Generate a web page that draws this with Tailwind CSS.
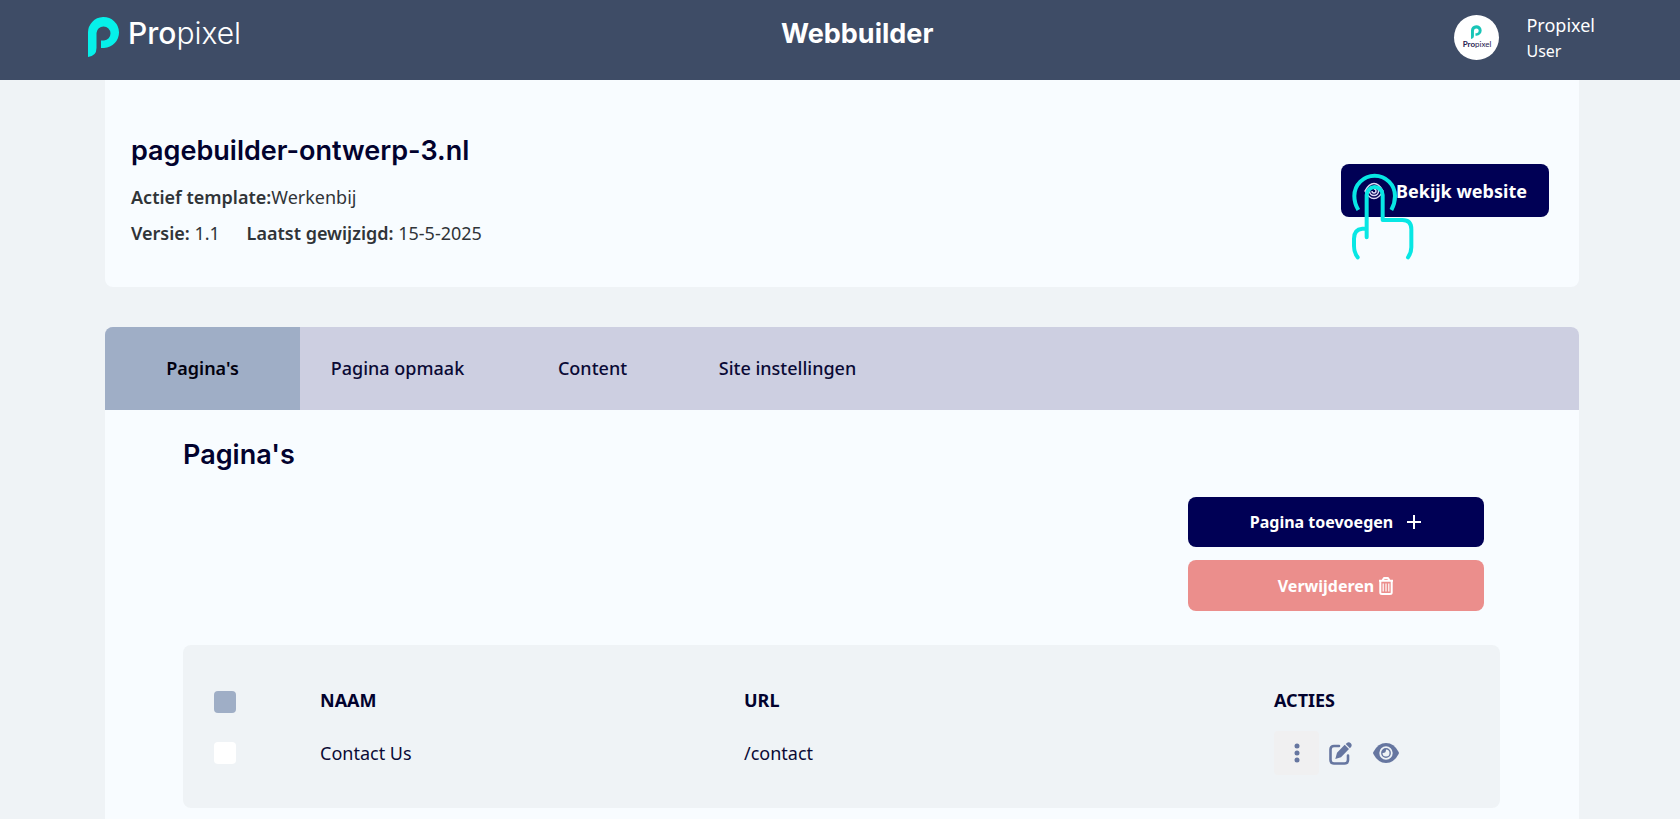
<!DOCTYPE html>
<html lang="nl">
<head>
<meta charset="utf-8">
<meta name="viewport" content="width=device-width, initial-scale=1">
<title>Webbuilder</title>
<script src="https://cdn.jsdelivr.net/npm/@tailwindcss/browser@4"></script>
</head>
<body class="min-h-screen bg-[#eff3f6] font-['Noto_Sans',sans-serif] text-lg text-[#0a0a35]">
<header class="flex h-20 items-start justify-between bg-[#3e4c66] pl-[88px] pr-[85px] text-white">
  <a href="#" class="flex w-[172px] items-start gap-2 pt-[17px]" aria-label="Propixel">
    <svg class="h-10 w-8 shrink-0" viewBox="0 0 32 40" aria-hidden="true">
      <path d="M0 40V16A15.500 15.500 0 1 1 16 31H13V23.500H16A7 7 0 1 0 8.500 16V31Q8.500 39 0 40Z" fill="#06f0ea"/>
    </svg>
    <span class="font-['Inter',sans-serif] text-[30px] leading-8"><span class="font-medium">Pro</span><span class="font-light">pixel</span></span>
  </a>
  <h1 class="pt-4 font-['Inter',sans-serif] text-[27px] font-bold leading-9">Webbuilder</h1>
  <div class="flex gap-[27px] pt-3">
    <div class="mt-[3px] flex size-[45px] flex-col items-center rounded-full bg-white pt-2.5">
      <svg class="h-[14px] w-[11px]" viewBox="0 0 32 40" aria-hidden="true">
        <path d="M0 40V16A15.500 15.500 0 1 1 16 31H13V23.500H16A7 7 0 1 0 8.500 16V31Q8.500 39 0 40Z" fill="#19c5b7"/>
      </svg>
      <span class="font-['Lato',sans-serif] text-[8px] leading-[10px] text-[#252050]"><span class="font-bold">Pro</span>pixel</span>
    </div>
    <div class="leading-[26px]">
      <p>Propixel</p>
      <p class="text-base leading-[26px]">User</p>
    </div>
  </div>
</header>

<main class="ml-[105px] mr-[101px]">
  <section class="flex items-start justify-between rounded-b-lg bg-[#f8fcff] pb-9 pl-[26px] pr-[30px] pt-[53px] text-[#303438]">
    <div>
      <h2 class="font-['Inter',sans-serif] text-[27px] font-semibold leading-9 text-[#02022e]">pagebuilder-ontwerp-3.nl</h2>
      <p class="mt-2.5 leading-9"><span class="font-semibold">Actief template:</span>Werkenbij</p>
      <p class="leading-9"><span class="font-semibold">Versie:</span> 1.1 <span class="ml-[22px] font-semibold">Laatst gewijzigd:</span> 15-5-2025</p>
    </div>
    <div class="relative mt-[31px]">
      <button type="button" class="flex h-[53px] w-[208px] items-center gap-3 rounded-lg bg-[#000055] pl-[23px] font-bold text-white">
        <svg class="h-[18px] w-5 shrink-0" viewBox="0 0 20 18" fill="none" stroke="#ddd8f4" stroke-width="1.500" aria-hidden="true">
          <path d="M1 9Q5 1.500 10 1.500T19 9Q15 16.500 10 16.500T1 9Z"/><circle cx="10" cy="9" r="4.500"/><path d="M10 7a2 2 0 1 1-2 2"/>
        </svg>
        Bekijk website
      </button>
      <svg class="pointer-events-none absolute left-2 top-1.5 h-[93px] w-[67px]" viewBox="120 90 201 279" fill="none" stroke="#08e7e4" stroke-width="12" stroke-linejoin="round" aria-hidden="true">
        <path d="M148 210Q136 190 136 168A61 61 0 0 1 258 168Q258 190 247 210"/>
        <path stroke-linecap="round" d="M173 292V165a24 24 0 0 1 48 0V240H280Q307 240 307 268V322Q307 338 297 352M168 266H160Q135 268 135 296V318Q135 338 146 352"/>
      </svg>
    </div>
  </section>

  <section class="mt-10 rounded-t-lg bg-[#f8fcff]">
    <nav class="flex h-[83px] overflow-hidden rounded-t-lg bg-[#cdcfe1]">
      <a href="#" aria-current="page" class="flex w-[195px] items-center justify-center bg-[#9faec6] pb-0.5 font-semibold text-[#02020f]">Pagina's</a>
      <a href="#" class="flex w-[195px] items-center justify-center pb-0.5 font-medium">Pagina opmaak</a>
      <a href="#" class="flex w-[195px] items-center justify-center pb-0.5 font-medium">Content</a>
      <a href="#" class="flex w-[195px] items-center justify-center pb-0.5 font-medium">Site instellingen</a>
    </nav>
    <div class="pb-10 pl-[78px] pr-[79px] pt-[27px]">
      <h2 class="font-['Inter',sans-serif] text-[27px] font-semibold leading-9 text-[#02022e]">Pagina's</h2>
      <div class="ml-auto mr-4 mt-6 flex w-[296px] flex-col gap-[13px] text-base font-bold text-white">
        <button type="button" class="flex h-[50px] items-center justify-center gap-[13px] rounded-lg bg-[#000055]">
          Pagina toevoegen
          <svg class="size-4" viewBox="0 0 16 16" stroke="currentColor" stroke-width="2" aria-hidden="true"><path d="M8 1V15M1 8H15"/></svg>
        </button>
        <button type="button" class="flex h-[51px] items-center justify-center gap-1 rounded-lg bg-[#eb8e8c]">
          Verwijderen
          <svg class="h-[18px] w-4" viewBox="0 0 16 18" fill="none" stroke="currentColor" stroke-width="2" stroke-linejoin="round" aria-hidden="true"><path d="M1 3.800H15M4.500 3.500L6 1H10L11.500 3.500M2.300 4V15.500Q2.300 17 4 17H12Q13.700 17 13.700 15.500V4"/><path d="M5.200 6.500V14.500M8 6.500V14.500M10.800 6.500V14.500" stroke-width="1.200"/></svg>
        </button>
      </div>
      <div class="mt-[34px] rounded-lg bg-[#eff3f6] pb-7 pl-[31px] pr-[14px] pt-7">
        <table class="w-full table-fixed text-left">
          <thead>
            <tr class="h-[53px]">
              <th class="w-1/12 pt-1"><input type="checkbox" aria-label="Alles selecteren" class="block size-[22px] appearance-none rounded bg-[#9faec6]"></th>
              <th class="w-4/12 font-bold text-[#02022e]">NAAM</th>
              <th class="w-5/12 font-bold text-[#02022e]">URL</th>
              <th class="w-2/12 font-bold text-[#02022e]">ACTIES</th>
            </tr>
          </thead>
          <tbody>
            <tr class="h-[54px]">
              <td><input type="checkbox" aria-label="Contact Us selecteren" class="block size-[22px] appearance-none rounded bg-white"></td>
              <td>Contact Us</td>
              <td>/contact</td>
              <td>
                <div class="flex items-center text-[#6676a0]">
                  <button type="button" aria-label="Meer" class="flex h-11 w-[45px] items-center justify-center rounded bg-[#f0f0f1]">
                    <svg class="h-5 w-1.5" viewBox="0 0 6 20" fill="currentColor" aria-hidden="true"><circle cx="3" cy="3" r="2.500"/><circle cx="3" cy="10" r="2.500"/><circle cx="3" cy="17" r="2.500"/></svg>
                  </button>
                  <button type="button" aria-label="Bewerken" class="ml-2.5">
                    <svg class="size-[23px]" viewBox="0 0 23 23" aria-hidden="true"><path d="M10 4H5Q1.500 4 1.500 7.500V18Q1.500 21.500 5 21.500H15.500Q19 21.500 19 18V13.500" fill="none" stroke="currentColor" stroke-width="2.600" stroke-linecap="round"/><path d="M15.700 2.800L20 7.100L12 15.200L6.300 17L8 10.800ZM16.700 2Q19.200-.800 21.800 1.200Q24 3.900 20.900 6.200Z" fill="currentColor"/></svg>
                  </button>
                  <button type="button" aria-label="Bekijken" class="ml-[21px]">
                    <svg class="h-5 w-[26px]" viewBox="0 0 26 20" aria-hidden="true"><path d="M13 0Q21 0 25.800 9.200Q26 10 25.800 10.800Q21 20 13 20T.2 10.800Q0 10 .2 9.200Q5 0 13 0Z" fill="currentColor"/><circle cx="13" cy="10" r="5.800" fill="currentColor" stroke="#eff3f6" stroke-width="1.800"/><path d="M13 6.500A3.500 3.500 0 1 1 9.500 10Q13.200 10.200 13 6.500Z" fill="#eff3f6"/></svg>
                  </button>
                </div>
              </td>
            </tr>
          </tbody>
        </table>
      </div>
    </div>
  </section>
</main>
</body>
</html>
